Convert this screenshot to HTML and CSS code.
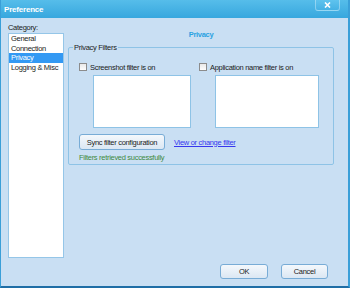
FILE: index.html
```html
<!DOCTYPE html>
<html lang="en">
<head>
  <meta charset="UTF-8" />
  <title>Preference</title>
  <link rel="stylesheet" href="styles.css">
</head>
<body>
  <div class="window">
    <div class="titlebar">
      <span class="title">Preference</span>
      <span class="close">
        <svg width="7" height="6" viewBox="0 0 7 6"><path d="M1 0.5 L6 5.5 M6 0.5 L1 5.5" stroke="#fff" stroke-width="1.6"/></svg>
      </span>
    </div>

    <div class="main">
      <div class="category">
        <div class="cat-label">Category:</div>
        <ul class="listbox">
          <li>General</li>
          <li>Connection</li>
          <li class="selected">Privacy</li>
          <li>Logging &amp; Misc</li>
        </ul>
      </div>

      <div class="page">
        <div class="page-title">Privacy</div>
        <fieldset class="group">
          <legend>Privacy Filters</legend>
          <div class="filters">
            <div class="filter">
              <label class="check"><span class="box"></span>Screenshot filter is on</label>
              <div class="textbox first"></div>
            </div>
            <div class="filter">
              <label class="check"><span class="box"></span>Application name filter is on</label>
              <div class="textbox second"></div>
            </div>
          </div>
          <div class="actions">
            <button class="btn sync">Sync filter configuration</button>
            <a class="link" href="#">View or change filter</a>
          </div>
          <div class="status">Filters retrieved successfully</div>
        </fieldset>
      </div>
    </div>

    <div class="footer">
      <button class="btn ok">OK</button>
      <button class="btn cancel">Cancel</button>
    </div>
  </div>
</body>
</html>
```

FILE: styles.css
```css
body {
  margin: 0;
  font-family: 'Liberation Sans', Arial, sans-serif;
  font-size: 7.5px;
  letter-spacing: -0.3px;
  color: #1b1b1b;
}
.window {
  width: 350px;
  height: 288px;
  box-sizing: border-box;
  display: flex;
  flex-direction: column;
  background: #c9dff3;
  border-left: 1px solid #3a9fd8;
  border-right: 2px solid #3a9fd8;
  border-bottom: 2px solid #1f6ea6;
}
.titlebar {
  height: 18px;
  flex-shrink: 0;
  display: flex;
  background: linear-gradient(#56bdea, #37a7de);
}
.title {
  padding-left: 3px;
  line-height: 19px;
  font-size: 8px;
  font-weight: bold;
  letter-spacing: -0.2px;
  color: #fff;
}
.close {
  margin-left: auto;
  margin-right: 8px;
  width: 25px;
  height: 11px;
  box-sizing: border-box;
  display: flex;
  align-items: center;
  justify-content: center;
  border: 1px solid rgba(255, 255, 255, 0.35);
  border-top: none;
  border-radius: 0 0 3px 3px;
  background: linear-gradient(#5fc3ee, #45b1e4);
}
.main {
  flex: 1;
  display: flex;
  gap: 4px;
  padding: 4px 0 0 7px;
}
.category {
  width: 56px;
}
.cat-label {
  line-height: 11px;
}
.listbox {
  margin: 0;
  padding: 0;
  list-style: none;
  height: 225px;
  box-sizing: border-box;
  background: #fff;
  border: 1px solid #95c6e8;
}
.listbox li {
  height: 9.6px;
  line-height: 9.6px;
  padding-left: 2px;
  white-space: nowrap;
}
.listbox li.selected {
  background: #3399f3;
  color: #fff;
}
.page {
  width: 266px;
  display: flex;
  flex-direction: column;
}
.page-title {
  margin-top: 8px;
  line-height: 10px;
  text-align: center;
  font-weight: bold;
  color: #2aa2e2;
}
.group {
  margin: 3px 0 0;
  padding: 0 0 1px;
  border: 1px solid #8ec3e6;
  border-radius: 2px;
  min-width: 0;
}
.group legend {
  margin-left: 4px;
  padding: 0 1px;
  line-height: 9px;
}
.filters {
  display: grid;
  grid-template-columns: 120px 1fr;
  padding: 10px 0 0 10px;
}
.check {
  display: flex;
  align-items: center;
  gap: 3px;
  height: 10px;
  white-space: nowrap;
}
.box {
  width: 8px;
  height: 8px;
  box-sizing: border-box;
  border: 1px solid #8c8c8c;
  background: linear-gradient(#e9e9e9, #fdfdfd);
}
.textbox {
  margin-top: 3px;
  height: 53px;
  box-sizing: border-box;
  background: #fff;
  border: 1px solid #8ec3e6;
}
.textbox.first {
  margin-left: 14px;
  width: 98px;
}
.textbox.second {
  margin-left: 16px;
  width: 104px;
}
.actions {
  display: flex;
  align-items: center;
  gap: 9px;
  margin-top: 6px;
  padding-left: 10px;
}
.btn {
  font-family: inherit;
  font-size: 7.5px;
  letter-spacing: -0.3px;
  color: #1b1b1b;
  padding: 0;
  height: 15px;
  box-sizing: border-box;
  border: 1px solid #78acd6;
  border-radius: 3px;
  background: linear-gradient(#f4f8fc, #dbe7f3);
}
.sync {
  width: 86px;
  height: 16px;
}
.link {
  color: #3737ef;
  text-decoration: underline;
}
.status {
  margin-top: 3px;
  padding-left: 10px;
  line-height: 10px;
  color: #3f8a3f;
}
.footer {
  display: flex;
  justify-content: flex-end;
  gap: 13px;
  padding: 0 20px 7px 0;
}
.ok {
  width: 48px;
}
.cancel {
  width: 47px;
}
```
